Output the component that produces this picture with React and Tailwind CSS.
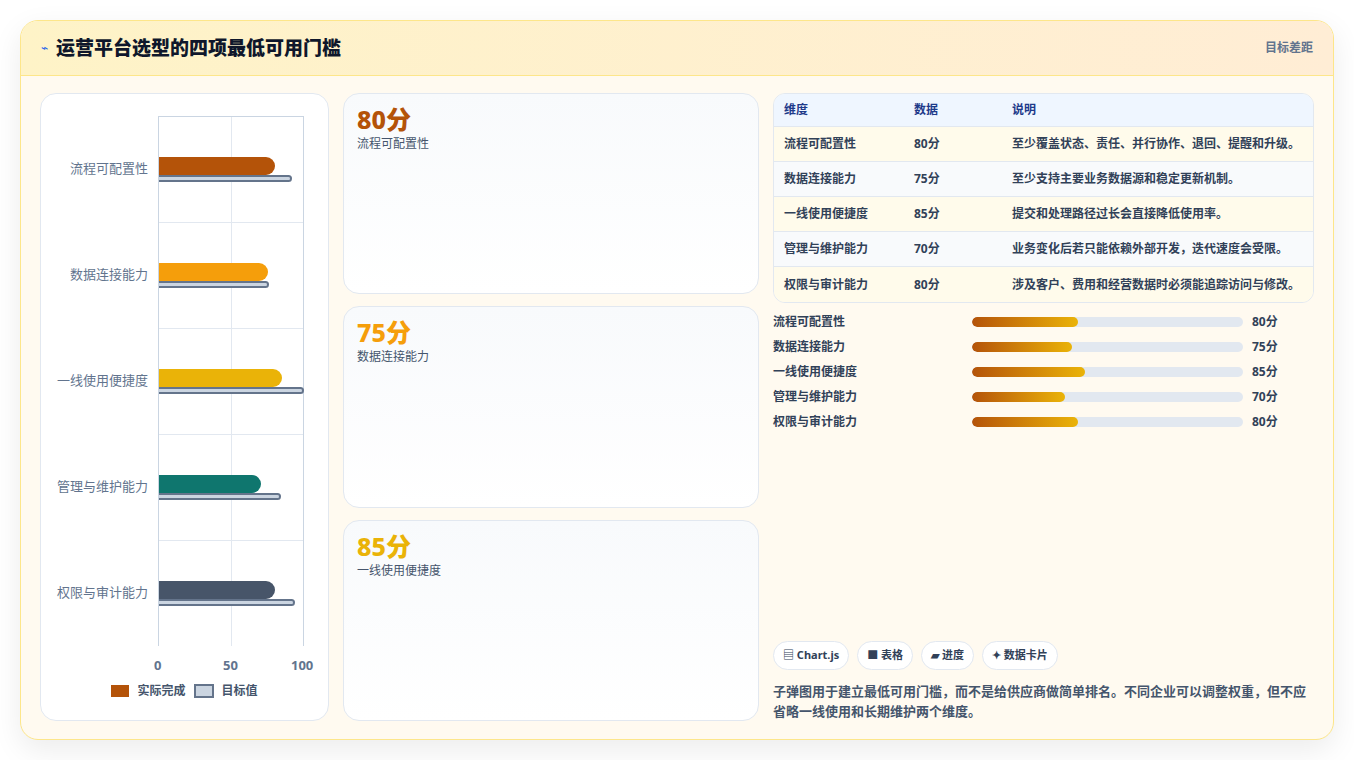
import React from 'react';

const rows = [
  { name: '流程可配置性', v: 80, t: 92, c: 'bg-[#b45309]', tc: 'text-[#b45309]', desc: '至少覆盖状态、责任、并行协作、退回、提醒和升级。' },
  { name: '数据连接能力', v: 75, t: 76, c: 'bg-[#f59e0b]', tc: 'text-[#f59e0b]', desc: '至少支持主要业务数据源和稳定更新机制。' },
  { name: '一线使用便捷度', v: 85, t: 100, c: 'bg-[#eab308]', tc: 'text-[#eab308]', desc: '提交和处理路径过长会直接降低使用率。' },
  { name: '管理与维护能力', v: 70, t: 84, c: 'bg-[#0f766e]', tc: 'text-[#0f766e]', desc: '业务变化后若只能依赖外部开发，迭代速度会受限。' },
  { name: '权限与审计能力', v: 80, t: 94, c: 'bg-[#475569]', tc: 'text-[#475569]', desc: '涉及客户、费用和经营数据时必须能追踪访问与修改。' },
];

const PLOT = 145;

function Chart() {
  return (
    <div className="w-[289px] shrink-0 rounded-2xl border border-slate-200 bg-white flex flex-col pt-[22px] pb-[20px]">
      <div className="flex flex-1">
        <div className="w-[117px] shrink-0 flex flex-col">
          {rows.map((r) => (
            <div key={r.name} className="flex-1 flex items-center justify-end pr-[10px] text-[13px] text-slate-500">
              {r.name}
            </div>
          ))}
        </div>
        <div className="relative w-[146px] border-l border-slate-300 border-t border-r border-slate-200">
          <div className="absolute inset-y-0 left-[72px] w-px bg-slate-200" />
          <div className="flex flex-col h-full">
            {rows.map((r, i) => (
              <div key={r.name} className={`flex-1 flex flex-col justify-center relative ${i < 4 ? 'border-b border-slate-200' : ''}`}>
                <div className={`h-[18px] rounded-r-[9px] ${r.c} relative z-10`} style={{ width: (r.v / 100) * PLOT }} />
                <div className="h-[7px] rounded-r bg-[#cbd5e1] border-2 border-l-0 border-[#64748b]" style={{ width: (r.t / 100) * PLOT }} />
              </div>
            ))}
          </div>
        </div>
      </div>
      <div className="relative h-[26px] ml-[117px] w-[146px] text-[13px] font-bold text-slate-500">
        <span className="absolute left-[-4px] top-[10px]">0</span>
        <span className="absolute left-[65px] top-[10px]">50</span>
        <span className="absolute left-[133px] top-[10px]">100</span>
      </div>
      <div className="flex items-center justify-center gap-[8px] mt-[10px] text-[12px] font-bold text-slate-600">
        <span className="w-[18px] h-[12px] bg-[#b45309]" />
        <span>实际完成</span>
        <span className="w-[20px] h-[14px] bg-[#cbd5e1] border-2 border-[#64748b]" />
        <span>目标值</span>
      </div>
    </div>
  );
}

function Cards() {
  return (
    <div className="w-[416px] shrink-0 flex flex-col gap-[12px]">
      {rows.slice(0, 3).map((r) => (
        <div key={r.name} className="flex-1 rounded-2xl border border-slate-200 bg-gradient-to-b from-[#f8fafc] to-white px-[13px] pt-[9px]">
          <div className={`text-[25px] font-extrabold leading-[32px] ${r.tc}`}>{r.v}分</div>
          <div className="text-[12px] text-slate-600">{r.name}</div>
        </div>
      ))}
    </div>
  );
}

function Right() {
  return (
    <div className="flex-1 flex flex-col">
      <div className="rounded-xl border border-slate-200 overflow-hidden text-[12px] font-bold text-slate-700">
        <div className="flex h-[33px] items-center bg-[#eff6ff] text-[#1e3a8a] border-b border-slate-200">
          <div className="w-[140px] pl-[10px]">维度</div>
          <div className="w-[98px]">数据</div>
          <div className="flex-1">说明</div>
        </div>
        {rows.map((r, i) => (
          <div key={r.name} className={`flex h-[35px] items-center ${i % 2 ? 'bg-[#f8fafc]' : 'bg-[#fffbeb]'} ${i < 4 ? 'border-b border-slate-200' : ''}`}>
            <div className="w-[140px] pl-[10px]">{r.name}</div>
            <div className="w-[98px]">{r.v}分</div>
            <div className="flex-1">{r.desc}</div>
          </div>
        ))}
      </div>
      <div className="flex flex-col gap-[9px] mt-[11px]">
        {rows.map((r) => (
          <div key={r.name} className="flex items-center h-[16px] text-[12px] font-bold text-slate-700">
            <div className="w-[199px]">{r.name}</div>
            <div className="w-[271px] h-[10px] rounded-full bg-slate-200 overflow-hidden">
              <div className="h-full rounded-full bg-gradient-to-r from-[#b45309] to-[#eab308]" style={{ width: r.v * 1.33 }} />
            </div>
            <div className="ml-[9px]">{r.v}分</div>
          </div>
        ))}
      </div>
      <div className="flex-1" />
      <div className="flex gap-[8px] text-[11px] font-bold text-slate-700">
        {['▤ Chart.js', '■ 表格', '▰ 进度', '✦ 数据卡片'].map((c) => (
          <span key={c} className="h-[29px] px-[9px] flex items-center rounded-full border border-slate-200 bg-white">{c}</span>
        ))}
      </div>
      <p className="mt-[11px] text-[13px] leading-[20px] font-bold text-slate-600">
        子弹图用于建立最低可用门槛，而不是给供应商做简单排名。不同企业可以调整权重，但不应省略一线使用和长期维护两个维度。
      </p>
    </div>
  );
}

export default function App() {
  return (
    <div className="w-[1354px] h-[760px] bg-white p-[20px] pr-[20px]" style={{ fontFamily: '"Noto Sans", "Noto Sans CJK SC", sans-serif' }}>
      <div className="w-[1314px] h-[720px] rounded-[18px] border border-[#fde68a] bg-[#fffaf0] shadow-[0_10px_30px_rgba(0,0,0,0.08)] overflow-hidden flex flex-col">
        <div className="h-[55px] shrink-0 flex items-center justify-between px-[20px] bg-gradient-to-r from-[#fef3c7] to-[#ffedd5] border-b border-[#fde68a]">
          <div className="flex items-center gap-[8px]">
            <span className="text-[12px] text-[#2563eb]">⌁</span>
            <span className="text-[19px] font-extrabold text-slate-900">运营平台选型的四项最低可用门槛</span>
          </div>
          <span className="text-[12px] font-bold text-slate-500">目标差距</span>
        </div>
        <div className="flex-1 flex gap-[14px] px-[19px] pt-[17px] pb-[18px]">
          <Chart />
          <Cards />
          <Right />
        </div>
      </div>
    </div>
  );
}
